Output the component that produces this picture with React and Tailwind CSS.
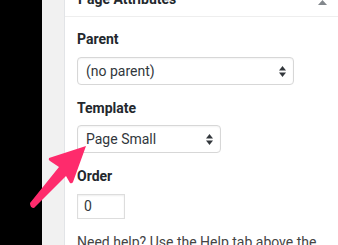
import React from "react";

const SelectArrows = () => (
  <svg width="7" height="11" viewBox="0 0 7 11" className="text-[#32373c]">
    <path d="M3.5 0 L7 4.5 L0 4.5 Z" fill="currentColor" />
    <path d="M0 6.5 L7 6.5 L3.5 11 Z" fill="currentColor" />
  </svg>
);

const FakeSelect = ({ value, width }) => (
  <div
    className={`${width} h-[28px] flex items-center justify-between pl-[8px] pr-[7px] bg-white border border-[#d7d7d7] rounded-[4px] shadow-[inset_0_1px_2px_rgba(0,0,0,0.05)] text-[14px] text-[#32373c]`}
  >
    <span>{value}</span>
    <SelectArrows />
  </div>
);

export default function App() {
  return (
    <div
      className="relative w-[338px] h-[245px] overflow-hidden flex bg-black"
      style={{ fontFamily: "Roboto, 'Noto Sans', sans-serif" }}
    >
      {/* dark admin menu */}
      <div className="w-[42px] shrink-0 bg-black" />
      {/* grey gutter */}
      <div className="w-[22px] shrink-0 bg-[#f1f1f1]" />

      {/* Page Attributes box */}
      <div className="flex-1 bg-white border-l border-[#e2e4e7] text-[#23282d]">
        <div className="h-[17px] border-b border-[#eeeeee] flex justify-between pl-[13px] pr-[11px]">
          <h2 className="-mt-[11px] text-[14px] leading-[20px] font-bold">Page Attributes</h2>
          <svg width="9" height="5" viewBox="0 0 9 5" className="text-[#82878c]">
            <path d="M4.5 0 L9 5 L0 5 Z" fill="currentColor" />
          </svg>
        </div>

        <div className="pl-[12px]">
          <p className="mt-[12px] text-[14px] leading-[20px] font-bold">Parent</p>
          <div className="mt-[8px]">
            <FakeSelect value="(no parent)" width="w-[217px]" />
          </div>

          <p className="mt-[13px] text-[14px] leading-[20px] font-bold">Template</p>
          <div className="mt-[7px]">
            <FakeSelect value="Page Small" width="w-[144px]" />
          </div>

          <p className="mt-[13px] text-[14px] leading-[20px] font-bold">Order</p>
          <div className="mt-[8px] w-[48px] h-[25px] border border-[#dddddd] shadow-[inset_0_1px_2px_rgba(0,0,0,0.07)] flex items-center pl-[6px] text-[14px] text-[#32373c]">
            0
          </div>

          <p className="mt-[13px] text-[14px] leading-[20px] text-[#444] whitespace-nowrap">
            Need help? Use the Help tab above the
          </p>
        </div>
      </div>

      {/* annotation arrow */}
      <svg className="absolute left-0 top-0 pointer-events-none" width="338" height="245" viewBox="0 0 338 245">
        <path
          d="M86 146 L49 158 Q48 160 50 161 L59 167 L30 203 Q30 208 34 208 L66 176 L70 183 Q72 184 73 182 Z"
          fill="#fe2b6c"
          strokeLinejoin="round"
        />
      </svg>
    </div>
  );
}
